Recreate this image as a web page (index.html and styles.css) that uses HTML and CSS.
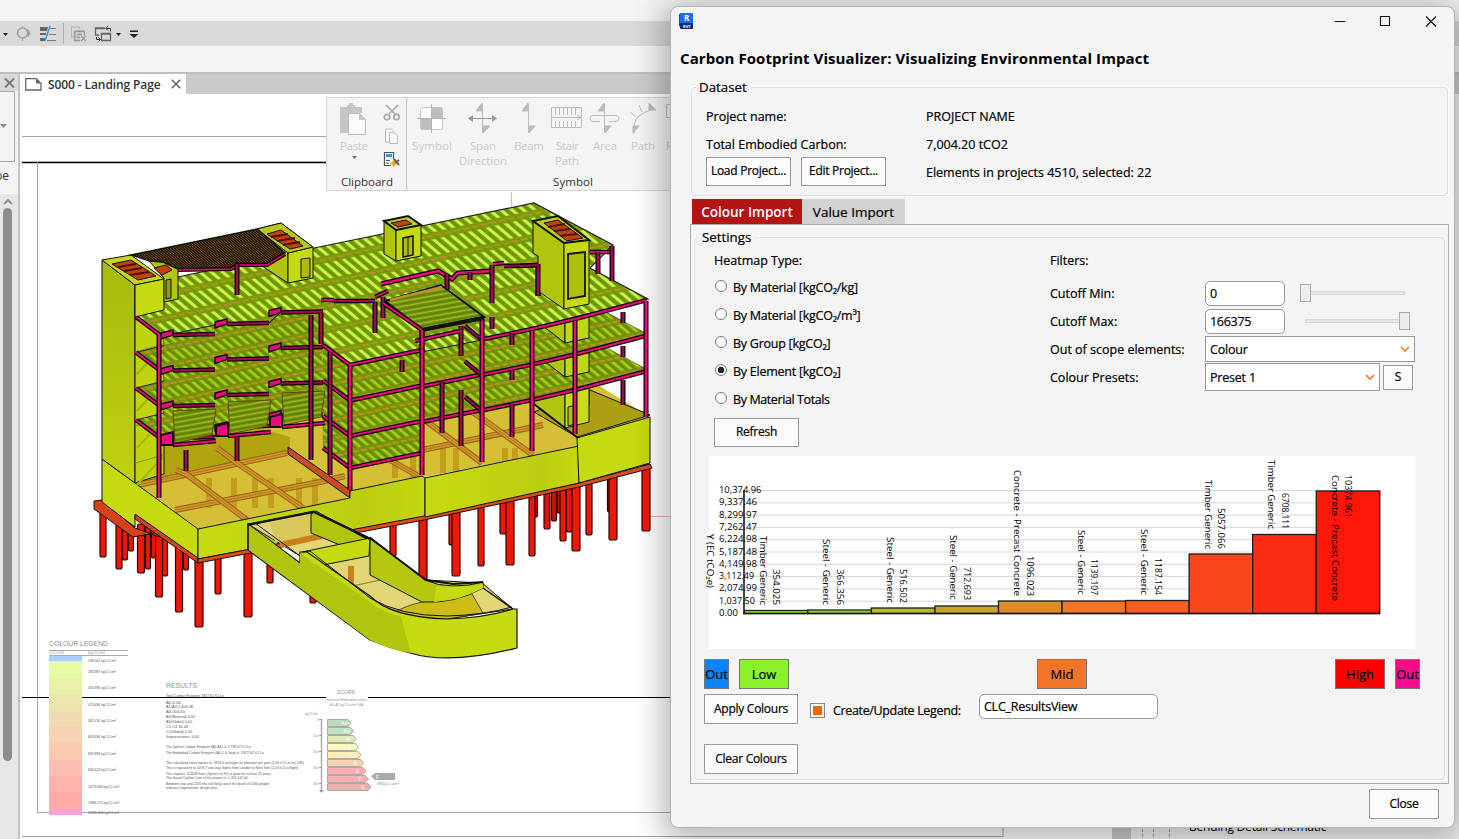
FILE: index.html
```html
<!DOCTYPE html>
<html lang="en">
<head>
<meta charset="utf-8">
<title>Carbon Footprint Visualizer</title>
<link rel="stylesheet" href="styles.css">
</head>
<body>
<div class="app">
  <div class="app-title"></div>
  <div class="quickbar">
    <svg width="150" height="25" viewBox="0 21 150 25">
      <path d="M3 33h5l-2.500 3z" fill="#222"/>
      <path d="M22.500 26v15M28 29.500l2 3.500-2 3.500z" stroke="#a0a0a0" fill="#a0a0a0"/><circle cx="22.500" cy="33" r="5" fill="#d9d9d9" stroke="#a0a0a0" stroke-width="1.500"/>
      <path d="M40 27h8l-1 4h-7zM40 33h6v2h-6zM40 38h5v3h-5z" fill="#666"/><path d="M50 28.500h6M49 34.500h7M47 40.500h9" stroke="#777"/><path d="M50 26l-5 15" stroke="#2a9df0" stroke-width="1.500"/>
      <path d="M63.500 23v21" stroke="#b0b0b0"/>
      <path d="M79 37h-7.500v-10h8v2M75.500 38.500v-8h8" fill="none" stroke="#b5b5b5"/><path d="M80 40.500h-5.500v-9h10v4M77 34.500h5M77 37.500h3M81 36l5 5m0-5l-5 5" fill="none" stroke="#999" stroke-width="1.300"/>
      <path d="M105 28h-9.500v7h4M95 28.500h10M101.500 33.500h9v7h-9zM101 34h10" fill="none" stroke="#666" stroke-width="1.300"/><path d="M106 28.500h4.500v3M108 26l-2 2.500 2 2M96.500 37v2.500h4M98.500 37.500l2 2-2 2" fill="none" stroke="#333"/>
      <path d="M116 33h5l-2.500 3zM129.500 34h9l-4.500 4zM130 30.500h8v1.500h-8z" fill="#222"/>
    </svg>
  </div>
  <div class="options-row"></div>
  <div class="workspace">
    <div class="sidebar">
      <div class="sidebar-head"><svg width="12" height="12" viewBox="0 0 12 12"><path d="M1 1.500l9 9m0-9l-9 9" stroke="#777" stroke-width="1.800"/></svg></div>
      <div class="type-box"><svg width="8" height="5"><path d="M0 0h7L3.500 4z" fill="#888"/></svg></div>
      <div class="type-text">pe</div>
      <div class="scroll-up"><svg width="10" height="6" viewBox="0 0 10 6"><path d="M1 5l4-4 4 4" fill="none" stroke="#888" stroke-width="1.800"/></svg></div>
      <div class="scroll-thumb"></div>
    </div>
    <div class="document">
      <div class="tabbar">
        <div class="doc-tab">
          <svg width="17" height="13" viewBox="0 0 17 13"><path d="M.7.700h10.500L16 5.500v6.500H.7z" fill="none" stroke="#666" stroke-width="1.300"/><path d="M11 .5l5 5h-5z" fill="#666"/></svg>
          <span>S000 - Landing Page</span>
          <svg width="10" height="10" viewBox="0 0 10 10"><path d="M.7.700l8.600 8.600m0-8.600L.7 9.300" stroke="#666" stroke-width="1.600"/></svg>
        </div>
      </div>
      <div class="canvas-row">
        <svg class="sheet" id="sheet" width="1092" height="745" viewBox="20 94 1092 745"></svg>
        <div class="browser-panel">
          <svg class="tree-lines" width="40" height="20"><path d="M2.500 0v20M13.500 0v20M29.500 0v20" stroke="#999" stroke-dasharray="3 2"/></svg>
          <span class="tree-text">Bending Detail Schematic</span>
        </div>
      </div>
    </div>
  </div>
</div>

<svg class="ribbon" width="400" height="95" viewBox="326 97 400 95">
  <rect x="326.500" y="97.500" width="420" height="93" fill="#f4f4f4" stroke="#d4d4d4"/>
  <path d="M406.500 98v92" stroke="#c8c8c8"/>
  <g fill="#c6c6c6" stroke="none">
    <path d="M340 107h7v-2h2v-2h4v2h2v2h7v6h-10v20h-12z"/>
    <path d="M348.500 113.500h11l6 6v15h-17z" fill="#fbfbfb" stroke="#bbb"/><path d="M359 113l7 7h-7z"/>
  </g>
  <path d="M352 156h5l-2.500 3z" fill="#777"/>
  <g fill="none" stroke="#aaa" stroke-width="1.700"><path d="M386 105l9 9M398 105l-9 9"/><circle cx="387" cy="117" r="2.700"/><circle cx="396.500" cy="117" r="2.700"/></g>
  <g fill="#f8f8f8" stroke="#bdbdbd"><path d="M390 142h-4.500v-13h6l3 3"/><path d="M389.500 132.500h5l3 3v8h-8z"/></g>
  <path d="M391 165.500h-6.500v-13h9v7" fill="#fff" stroke="#555" stroke-width="1.200"/><path d="M386 154h6v3h-6z" fill="#3b97d9"/><path d="M386 160.500h4M386 163h3" stroke="#555"/><path d="M390 163l4-3 3 3-3 4z" fill="#ffab19"/><path d="M394 159l5 6M399 160l-4 3" stroke="#666" stroke-width="2"/>
  <rect x="420.500" y="107.500" width="22" height="22" rx="2" fill="#fff" stroke="#c2c2c2"/><path d="M431.500 108h11v10h-11zM421 118.500h10.500v11h-10.500z" fill="#bdbdbd"/><path d="M431.500 104v29M417 118.500h29" stroke="#b5b5b5"/>
  <g stroke="#bbb" fill="#bbb"><path d="M482.500 104v28"/><path d="M482 103v8h-6zM483 126h7l-7 7z"/><path d="M470 118.500h25" stroke="#999"/><path d="M473 115l-5 3.500 5 3.500zM492 115l5 3.500-5 3.500z" fill="#999" stroke="none"/>
  <path d="M528.500 104v29"/><path d="M528 103v8h-6zM529 126h6l-6 7z"/>
  <path d="M551.500 107.500h30v20h-30zM555.500 108v7m4-7v7m4-7v7m4-7v7m4-7v7m4-7v7M555.500 121v6m4-6v6m4-6v6m4-6v6m4-6v6m4-6v6M552 117.500h29M577 115l4 2.500-4 2.500" fill="none"/>
  <path d="M604.500 104v28"/><path d="M604 103v8h-6zM605 126h6l-6 7z"/><path d="M600 121.500h-7a2.500 2.500 0 0 1 0-6h23a2.500 2.500 0 0 1 0 6h-7" fill="none"/>
  <path d="M634 134v-9q2-11 17-15" fill="none"/><path d="M649 103l7 7h-7zM633 126h6l-6 7zM639 105l3 7M630 112l6 5" /></g>
  <path d="M666.500 104.500h12v13h-12z" fill="none" stroke="#bbb"/>
  <g class="ribbon-disabled"><text x="340" y="150" textLength="28">Paste</text><text x="412" y="150" textLength="40">Symbol</text><text x="470" y="150" textLength="26">Span</text><text x="459" y="165" textLength="48">Direction</text><text x="514" y="150" textLength="30">Beam</text><text x="556" y="150" textLength="23">Stair</text><text x="555" y="165" textLength="24">Path</text><text x="593" y="150" textLength="24">Area</text><text x="631" y="150" textLength="24">Path</text><text x="666" y="150">P</text></g>
  <g class="ribbon-label"><text x="341" y="186" textLength="52">Clipboard</text><text x="553" y="186" textLength="40">Symbol</text></g>
</svg>

<div class="dialog">
  <div class="titlebar">
    <svg width="16" height="18" viewBox="0 0 16 18"><path d="M1 2.500L3 1v14l-2-1z" fill="#0c4cc0"/><rect x="2" y="1" width="13" height="11" rx="1" fill="#1a6cff"/><path d="M2 11h13v5q0 1-1 1H3q-1 0-1-1z" fill="#0b2f78"/><text x="6" y="9" font-family="Open Sans" font-size="8" font-weight="700" fill="#fff">R</text><text x="5" y="15.500" font-family="Open Sans" font-size="4" font-weight="700" fill="#fff">RVT</text></svg>
    <svg class="window-buttons" width="110" height="16" viewBox="0 0 110 16"><path d="M5 8.500h10M50.500 3.500h9v9h-9zM96 3.500l10 10m0-10l-10 10" fill="none" stroke="#111" stroke-width="1.100"/></svg>
  </div>
  <h1 class="heading">Carbon Footprint Visualizer: Visualizing Environmental Impact</h1>

  <fieldset class="group dataset">
    <legend>Dataset</legend>
    <div class="dataset-left">
      <span class="line">Project name:</span>
      <span class="line">Total Embodied Carbon:</span>
      <div class="button-row"><button class="btn">Load Project...</button><button class="btn">Edit Project...</button></div>
    </div>
    <div class="dataset-right">
      <span class="line">PROJECT NAME</span>
      <span class="line">7,004.20 tCO2</span>
      <span class="line">Elements in projects 4510, selected: 22</span>
    </div>
  </fieldset>

  <div class="tabs"><div class="tab active">Colour Import</div><div class="tab">Value Import</div></div>
  <div class="tab-panel">
    <fieldset class="group settings">
      <legend>Settings</legend>
      <div class="settings-top">
        <div class="heatmap">
          <span class="line">Heatmap Type:</span>
          <div class="radio"><i></i><span>By Material [kgCO₂/kg]</span></div>
          <div class="radio"><i></i><span>By Material [kgCO₂/m³]</span></div>
          <div class="radio"><i></i><span>By Group [kgCO₂]</span></div>
          <div class="radio checked"><i></i><span>By Element [kgCO₂]</span></div>
          <div class="radio"><i></i><span>By Material Totals</span></div>
          <button class="btn refresh">Refresh</button>
        </div>
        <div class="filters">
          <span class="line">Filters:</span>
          <div class="filter"><label>Cutoff Min:</label><div class="input num">0</div><div class="slider min"><b></b></div></div>
          <div class="filter"><label>Cutoff Max:</label><div class="input num">166375</div><div class="slider max"><b></b></div></div>
          <div class="filter"><label>Out of scope elements:</label><div class="select wide">Colour<svg width="10" height="7"><path d="M1 1l4 4 4-4" fill="none" stroke="#f47a20" stroke-width="1.600"/></svg></div></div>
          <div class="filter"><label>Colour Presets:</label><div class="select">Preset 1<svg width="10" height="7"><path d="M1 1l4 4 4-4" fill="none" stroke="#f47a20" stroke-width="1.600"/></svg></div><button class="btn save">S</button></div>
        </div>
      </div>
      <svg class="chart" id="chart" width="706" height="193" viewBox="709 456 706 193"></svg>
      <div class="swatches">
        <div class="swatch out-low">Out</div><div class="swatch low">Low</div><div class="swatch mid">Mid</div><div class="swatch high">High</div><div class="swatch out-high">Out</div>
      </div>
      <div class="apply-row">
        <button class="btn action">Apply Colours</button>
        <div class="checkbox"><b></b></div>
        <label>Create/Update Legend:</label>
        <div class="input view">CLC_ResultsView</div>
      </div>
      <button class="btn action clear">Clear Colours</button>
    </fieldset>
  </div>
  <div class="footer"><button class="btn close">Close</button></div>
</div>
<script src="script.js"></script>
</body>
</html>
```

FILE: styles.css
```css
* { box-sizing: border-box; }
body { margin: 0; width: 1459px; height: 839px; overflow: hidden; position: relative; background: #f4f4f4; font-family: "Open Sans", "Noto Sans", sans-serif; color: #000; }
svg { display: block; flex: none; }

.app { height: 839px; display: flex; flex-direction: column; }
.app-title { height: 21px; flex: none; background: #f4f4f4; }
.quickbar { height: 25px; flex: none; background: #d9d9d9; }
.options-row { height: 28px; flex: none; background: #f4f4f4; border-bottom: 2px solid #bfbfbf; }
.workspace { flex: 1; display: flex; min-height: 0; }
.sidebar { width: 20px; flex: none; background: #f4f4f4; border-right: 2px solid #c3c3c3; display: flex; flex-direction: column; }
.sidebar-head { height: 17px; background: #d9d9d9; padding: 3px 0 0 4px; }
.type-box { height: 71px; width: 15px; border: 1px solid #aaa; border-left: 0; display: flex; align-items: center; }
.type-text { height: 32px; padding-top: 5px; font-size: 12px; margin-left: -5px; color: #333; }
.scroll-up { height: 14px; background: #e6e6e6; padding: 5px 3px; }
.scroll-thumb { flex: 1; background: #e6e6e6; padding-left: 3px; }
.scroll-thumb::before { content: ""; display: block; width: 9px; height: 553px; border-radius: 5px; background: #8c8c8c; }
.document { flex: 1; min-width: 0; display: flex; flex-direction: column; }
.tabbar { height: 20px; background: #cbcbcb; }
.doc-tab { width: 166px; height: 20px; background: #fff; padding: 0 0 0 5px; display: flex; align-items: center; gap: 6px; font-size: 12px; font-weight: 600; color: #333; letter-spacing: -.1px; white-space: nowrap; }
.doc-tab span { width: 117px; }
.canvas-row { display: flex; height: 745px; }
.sheet { background: #fff; }
.browser-panel { flex: 1; border-left: 19px solid #ccc; background: #f4f4f4; display: flex; align-items: flex-end; overflow: hidden; white-space: nowrap; }
.tree-lines { margin-left: 9px; }
.tree-text { font-size: 12px; line-height: 16px; padding: 0 0 4px 9px; letter-spacing: -.2px; }

.ribbon { position: absolute; left: 326px; top: 97px; font-size: 11.500px; }
.ribbon-disabled { fill: #c9c9c9; }
.ribbon-label { fill: #333; }

.dialog { position: absolute; left: 670px; top: 6px; width: 785px; height: 822px; background: #f4f4f4; border: 1px solid #b4b4b4; border-radius: 8px; box-shadow: 0 6px 30px 8px rgba(0,0,0,.28); font-size: 12.500px; -webkit-text-stroke: .2px currentColor; }
.titlebar { height: 28px; display: flex; align-items: center; justify-content: space-between; padding: 0 13px 0 7px; -webkit-text-stroke: 0; }
.window-buttons { margin-right: 1px; }
.heading { margin: 11px 0 0 9px; font-size: 15px; line-height: 24px; font-weight: 700; letter-spacing: .07px; white-space: nowrap; -webkit-text-stroke: 0; }
.group { margin: 0; padding: 0; border: 1px solid #d5dfe5; border-radius: 4px; min-width: 0; box-shadow: 0 0 0 1px #fff; }
.group legend { padding: 0 4px 0 3px; margin-left: 4px; font-size: 13.300px; line-height: 18px; }
.dataset { margin: 8px 6px 0 20px; height: 118px; display: flex; padding-left: 14px; }
.dataset legend { margin-left: -10px; }
.dataset-left { width: 220px; padding-top: 7px; }
.dataset-right { padding-top: 7px; }
.line { display: block; height: 28px; line-height: 28px; white-space: nowrap; }
.button-row { display: flex; gap: 10px; margin-top: -2px; }
.btn { font: inherit; font-size: 12px; letter-spacing: -.27px; color: #000; background: #fbfbfb; border: 1px solid #999; height: 29px; width: 85px; padding: 0 0 2px; white-space: nowrap; flex: none; -webkit-text-stroke: .2px #000; }
.tabs { display: flex; margin: 3px 0 0 21px; height: 25px; }
.tab { width: 103px; background: #d2d2d2; line-height: 26px; text-align: center; font-size: 13.500px; }
.tab.active { width: 110px; background: #b31414; color: #fff; font-weight: 600; -webkit-text-stroke: 0; }
.tab-panel { margin: 0 5px 0 19px; height: 560px; border: 1px solid #acacac; padding: 3px 3px 3px; }
.settings { height: 552px; }
.settings-top { display: flex; height: 210px; padding: 1px 0 0 19px; }
.heatmap { width: 336px; }
.heatmap .line { height: 26px; }
.radio { display: flex; align-items: center; height: 28px; white-space: nowrap; letter-spacing: -.25px; }
.radio:last-of-type { letter-spacing: -.4px; }
.radio i { width: 12px; height: 12px; border: 1px solid #777; border-radius: 50%; background: #fff; margin-right: 6px; margin-left: 1px; margin-top: -2px; }
.radio.checked i { background: radial-gradient(circle, #222 3px, #fff 3.600px); }
.refresh { margin-top: 5px; }
.filters .line { height: 32px; line-height: 28px; }
.filter { display: flex; align-items: center; height: 28px; white-space: nowrap; }
.filter label { width: 155px; }
.input { border: 1px solid #999; border-radius: 5px; background: #fff; height: 25px; line-height: 24px; padding-left: 4px; }
.num { width: 80px; letter-spacing: -.3px; }
.slider { position: relative; width: 100px; height: 4px; background: #e6e8e7; border: 1px solid #d4d6d5; margin-left: 20px; }
.slider b { position: absolute; top: -8px; width: 11px; height: 18px; background: #ececec; border: 1px solid #aaa; }
.slider.min b { left: -6px; }
.slider.max b { right: -6px; }
.select { display: flex; align-items: center; justify-content: space-between; width: 175px; height: 28px; border: 1px solid #999; background: #fff; padding: 0 4px; letter-spacing: -.2px; }
.select.wide { width: 210px; height: 26px; }
.save { width: 30px; height: 25px; margin-left: 3px; }
.chart { background: #fff; margin-left: 14px; overflow: visible; }
.chart text { font-size: 9.800px; }
.swatches { display: flex; margin: 10px 24px 0 9px; }
.swatch { width: 50px; height: 30px; border: 1px solid #777; line-height: 29px; text-align: center; font-size: 13px; overflow: hidden; }
.out-low { background: #0a84ff; width: 25px; display: flex; justify-content: center; }
.low { background: #8af22a; margin-left: 10px; }
.mid { background: #f27427; margin: 0 auto; }
.high { background: #f00; }
.out-high { background: #ff0a8c; width: 25px; margin-left: 10px; display: flex; justify-content: center; }
.apply-row { display: flex; margin: 5px 0 0 9px; align-items: flex-start; }
.action { width: 94px; height: 30px; }
.checkbox { width: 15px; height: 15px; border: 1px solid #888; background: #fff; padding: 2px; margin: 9px 8px 0 12px; }
.checkbox b { display: block; width: 9px; height: 9px; background: #f2650a; }
.apply-row label { width: 146px; line-height: 33px; letter-spacing: -.35px; }
.view { width: 179px; letter-spacing: -.25px; }
.clear { display: block; margin: 17px 0 0 9px; }
.footer { display: flex; justify-content: flex-end; padding: 5px 15px 0 0; }
.close { width: 70px; height: 30px; }
```

FILE: script.js
```js
const poly = (pts, fill, extra = 'stroke="#111" stroke-width="1"') => `<polygon points="${pts}" fill="${fill}" ${extra}/>`;
const line = (pts, color, w) => `<polyline points="${pts}" fill="none" stroke="${color}" stroke-width="${w}"/>`;
const label = (x, y, s, size, w, fill = '#8f8f8f') => `<text x="${x}" y="${y}" font-size="${size}" fill="${fill}"${w ? ` textLength="${w}" lengthAdjust="spacingAndGlyphs"` : ''}>${s}</text>`;
const LIME = '#c5da0f', OLIVE = '#b1c40e', PINK = '#f0087e', MAROON = '#a0085a';
// Steel members are drawn as a dark casing with a coloured core.
const beam = (pts, c = PINK, w = 4.5) => line(pts, '#120208', w) + line(pts, c, w - 2.6);
const column = (x, y1, y2, c = PINK) => beam(`${x},${y1} ${x},${y2}`, c, 5);

function pile([x, y1, y2, w = 7, c = '#ee1808']) {
  return `<rect x="${x - w / 2}" y="${y1}" width="${w}" height="${y2 - y1}" rx="2" fill="${c}" stroke="#300" stroke-width="1.200"/>`;
}

function drawBuilding() {
  let o = '';
  const rearPiles = [[119,524,569,6],[125,524,560,5],[131,524,551,5],[141,524,573],[148,524,569,5],[154,524,558,5],[165,530,576,5],[103,510,557,6],[218,555,594,6],[186,545,570,5],[270,555,583,6],[313,580,603,6],
    [393,520,556,6],[451,510,545,4],[503,495,534,6],[535,487,517,5,'#c9150a'],[547,487,529,6,'#d9150a'],[554,485,521,5,'#c9150a'],[559,480,513,4,'#b9150a'],[563,483,541,6],[569,480,532,5],[609,470,512,3,'#a01008'],[589,478,535,6],[481,500,566,6],[532,490,556,6]];
  o += rearPiles.map(pile).join('');
  o += [[159,532,597],[179,542,612,7],[199,558,627,8],[248,548,617,8],[423,512,580,8],[456,510,576,8],[510,498,565,8],[576,484,551,8],[613,474,540,8],[646,464,531,8]].map(pile).join('');

  // Basement deck and its timber grid.
  o += poly('102,459 164,310 590,380 650,417 579,446 425,477 350,498 198,529', '#d5bf35', '');
  o += poly('164,440 250,425 290,437 290,450 138,484 164,470', '#aaa008', 'opacity=".85"');
  for (const x of [206, 231, 252, 268, 296, 312, 392, 410, 440, 453, 502, 512]) o += `<rect x="${x}" y="${x > 380 ? 448 : 478}" width="6" height="${x > 430 ? 25 : 30}" fill="#bd8a12" opacity=".65"/>`;
  for (const g of ['138,485 287,453', '175,510 320,482 345,476', '176,470 186,474 247,520', '217,448 237,463 303,508', '350,465 422,450 543,425', '390,460 420,477', '425,420 482,463', '470,410 533,455'])
    o += line(g, '#94600e', 6) + line(g, '#d1962b', 4) + line(g, '#a8721a', .8);
  o += poly('288,447 350,490 350,498 288,454', '#c74e18');

  // Perimeter walls.
  o += poly('94,501 102,500 135,528 198,551 198,561 155,533 133,537 94,509', '#d8421a');
  o += poly('102,459 135,483 198,529 198,559 135,516 135,527 102,502', LIME);
  o += poly('135,514 198,558 198,563 135,519', '#d8421a');
  o += poly('198,529 350,498 350,491 422,476 425,478 425,517 198,559', 'url(#wallFront)');
  o += poly('198,559 424,516 579,483 650,464 652,468 579,487 424,520 198,563', '#e04a1c');
  o += poly('425,478 579,446 579,483 425,517', 'url(#wallFront)');
  o += poly('577,438 650,417 650,463 579,483', LIME);
  o += poly('590,390 650,415 577,437 534,412', '#aaa012');

  // West stair tower.
  o += poly('102,260 135,285 135,483 102,459', 'url(#towerSide)');
  o += poly('135,285 164,279 164,474 135,483', '#c0d30e');
  for (let y = 352; y < 470; y += 37) o += line(`135,${y} 164,${y - 8}`, '#808c08', 1) + line(`137,${y + 22} 163,${y - 6}`, '#a2b50b', 2);

  // Storeys from the lowest upwards; each slab covers the one below.
  for (let i = 3; i >= 0; i--) {
    const y = i * 35.500, s = i === 3 ? 103 : y;
    const w = p => p.map(([a, b]) => `${a},${b + s}`).join(' ');
    if (i === 0) o += poly('136,317 178,277 314,248 534,203 613,245 590,268 648,299 482,340 422,352 350,365 322,344 322,312 281,312 268,324 215,325 172,334 159,335', 'url(#roof)', 'stroke="#222" stroke-width="1.200"');
    else {
      o += poly(w([[136,317],[164,310],[164,292],[322,272],[322,312],[281,315],[227,324],[172,334],[159,335]]), 'url(#deck)', '');
      o += line(w([[136,317],[164,310]]), '#222', 1);
      if (i < 3) o += poly(w([[422,290],[590,268],[648,299],[482,340],[422,351]]), 'url(#deck)', 'stroke="#333" stroke-width=".6"');
      o += poly(w([[322,290],[375,290],[422,290],[422,350],[350,365],[323,345]]), 'url(#deck)', '');
    }
    // East core passing through the storey.
    if (i > 0) {
      const b = i * 34;
      o += poly(`534,${251 + b} 565,${275 + b} 565,${309 + b} 534,${285 + b}`, OLIVE) + poly(`565,${275 + b} 589,${270 + b} 589,${304 + b} 565,${309 + b}`, '#c2d713');
    }
    if (i === 3) o += poly('534,370 565,390 565,428 534,404', OLIVE) + poly('565,390 589,385 589,422 565,428', '#c8dc18') + poly('568,407 576,405 576,424 568,426', '#b2c010') + line('534,404 578,438', '#111', 2);
    o += beam(w([[136,317],[160,335]]));
    for (const [x, yy] of [[173,335],[227,324],[281,312.500]]) {
      o += beam(w([[x, yy],[x + 42, yy - 1]]), MAROON);
      o += poly(w([[x - 12, yy - 2],[x, yy - 5],[x, yy],[x - 12, yy + 4]]), PINK, 'stroke="#111" stroke-width="1.500"');
    }
    if (i < 3) o += beam(w([[482,339.500],[532,329],[575,319],[647,300]]));
    o += beam(w([[323,345],[350,365],[422,350]]));
    if (i > 0 && i < 3) o += beam(w([[422,351],[482,339]]));
    if (i < 3) o += beam(w([[465,326],[482,340]]), MAROON);
  }
  // Pitched ceiling panels of the lowest storey.
  for (const [x, y] of [[173, 411], [228, 402], [282, 393]]) o += poly(`${x},${y} ${x + 43},${y - 2} ${x + 39},${y + 24} ${x + 2},${y + 32}`, 'url(#ribs)', 'stroke="#68400a" stroke-width="1"') + beam(`${x},${y + 34} ${x + 43},${y + 30}`) + poly(`${x - 12},${y + 24} ${x},${y + 21} ${x},${y + 34} ${x - 12},${y + 34}`, PINK, 'stroke="#111" stroke-width="2"');

  for (const [x, a, b, c] of [[159,335,498],[186,450,471,MAROON],[237,437,461,MAROON],[311,315,460,MAROON],[321,313,344,MAROON],[330,352,475,MAROON],[350,366,490],[422,329,475],[375,302,333,MAROON],[402,360,372,MAROON],[442,382,433,MAROON],[461,326,356,MAROON],[461,390,446,MAROON],[482,318,462],[492,317,329,MAROON],[512,333,345,MAROON],[512,370,380,MAROON],[512,404,437,MAROON],[532,331,451],[575,321,434],[623,312,323,MAROON],[623,346,357,MAROON],[623,380,405,MAROON],[646,301,417]]) o += column(x, a, b, c);
  o += beam('590,252 613,252') + column(598,252,274,MAROON) + column(612,246,281,MAROON);

  // Stepped beams and raised platform in the centre.
  o += beam('321,300 334,300') + beam('334,301 375,301', MAROON) + beam('375,297 388,291') + beam('381,284 438,271 452,279 458,273 493,271', PINK, 5) + beam('493,264 504,263') + beam('504,266 540,265', MAROON);
  o += column(447,274,290,MAROON) + column(470,272,280,MAROON) + column(492,265,303,MAROON) + column(538,264,296,MAROON) + column(383,297,318,MAROON);
  o += beam('415,341 460,331');
  o += poly('385,301 441,285 484,317 422,329', 'url(#ribs)', 'stroke="#111" stroke-width="2"') + line('390,300 442,287', '#c48c32', 2.500) + beam('383,303 422,330') + line('422,330 484,318', '#111', 4) + column(422,330,352);

  // Roof-level cores.
  const slats = (pts, d) => poly(pts, '#c5400b', 'stroke="#111"') + d.map(p => line(p, '#43140a', 2)).join('');
  o += poly('102,260 131,255 164,279 135,285', '#c8d816') + slats('112,264 131,260 156,276 138,280', ['118,267 136,264','124,271 142,268','130,275 149,272']);
  o += poly('135,285 164,279 164,310 135,317', LIME) + poly('149,261 167,262 178,269 178,299 164,302 164,278', OLIVE) + poly('166,280 171,279 171,298 166,299', '#8e9c0a');
  o += slats('154,268 166,265 172,270 162,275', []);
  o += poly('257,229 281,223 313,247 288,253 288,283 262,266', OLIVE) + poly('288,253 313,247 313,278 288,283', LIME) + poly('301,259 310,258 310,277 301,278', '#aabd0e') + poly('257,229 281,223 313,247 288,253', '#b9ca16') + slats('267,234 281,230 303,246 290,249', ['271,237 288,234','277,241 295,238','283,245 300,242']);
  o += poly('131,255 257,229 285,253 267,264 237,263 229,269 178,269 163,262 150,261', 'url(#grille)', 'stroke="#111" stroke-width="1.500"') + beam('178,270 231,269 237,265 267,265 285,254', PINK, 4) + column(237,264,295,MAROON);
  o += poly('384,221 396,230 396,261 384,254', OLIVE) + poly('396,230 421,225 421,256 396,261', LIME) + poly('384,221 408,216 421,225 396,230', '#c0d012', 'stroke="#111" stroke-width="2"') + slats('391,223 406,220 412,224 398,227', []) + poly('403,238 413,236 413,255 403,257', '#afc00c', 'stroke="#111" stroke-width="1.500"') + line('408,237 408,256', '#111', 1);
  o += poly('533,221 564,243 564,309 538,291 538,256 533,253', OLIVE) + poly('564,243 589,240 589,304 564,309', LIME) + poly('533,221 558,216 589,240 564,243', '#bfd014', 'stroke="#111" stroke-width="2"') + slats('544,223 558,220 583,238 567,241', ['548,227 565,224','554,231 571,229','560,236 577,234']) + poly('568,254 585,252 585,296 568,299', '#aebf0d', 'stroke="#111" stroke-width="1.800"') + column(538,264,296,MAROON) + beam('520,266 538,265', MAROON);

  // Access ramp.
  o += poly('248,524 314,511 370,538 425,580 482,583 513,609 447,619 395,612 370,602 300,556', '#e3d676');
  o += poly('270,523 310,514 313,540 275,542', '#d9c85c', '') + line('280,545 322,536', '#c68119', 6) + line('351,566 351,590', '#c98218', 6) + line('353,586 380,580', '#8d7a13', 1);
  o += '<path d="M370 602Q405 620 447 619L483 613 472 594 422 602Q405 606 395 612z" fill="#cdbd17" stroke="#333" stroke-width=".8"/>';
  o += poly('311,514 316,511 370,541 340,545 311,533', OLIVE);
  o += '<path d="M370 537L425 580Q438 586 453 586 470 586 483 582L483 588Q455 604 422 602L370 575z" fill="#b5c70e" stroke="#111"/><path d="M436 586Q465 588 483 584V588Q462 600 434 602z" fill="#c5da0f"/>';
  o += poly('302,552 370,538 369,556 323,565', LIME);
  o += '<path d="M248 524L300 563 300 552 307 552 370 596Q390 617 447 619 485 618 513 609L517 609V648Q450 665 410 653 390 648 370 640L248 550z" fill="#c5da0f" stroke="#111" stroke-width="1.200"/>';
  o += '<path d="M249 525L300 564V553L370 602Q382 612 401 617L411 653Q390 650 370 640L249 550z" fill="#b1c40e"/>';
  o += '<path d="M248 524L255 523 300 556M302 552L310 551 370 598Q400 616 447 616 485 615 512 607" fill="none" stroke="#111" stroke-width="1"/>' + line('370,538 426,580 453,584 483,582', '#111', 2) + line('248,525 314,512 370,539', '#111', 2) + line('483,588 513,609', '#111', 1.500) + line('248,524 248,550', '#111', 1.200);
  return o;
}

function drawLegend() {
  let o = label(49, 646, 'COLOUR LEGEND', 8, 59) + label(49, 654, 'COLOUR', 4, 15) + label(88, 654, '(kgCO₂/m²)', 4, 17);
  o += line('49,650.500 128,650.500', '#aaa', 1) + line('49,655.500 128,655.500', '#aaa', 1);
  const bands = [['#a9cffb',656,661],['#e6fba4',661,678],['#e8f0aa',678,694],['#ece5ac',694,710],['#f0dcb0',710,727],['#f7d2b0',727,743],['#f9c9b0',743,760],['#fbbfaf',760,776],['#fcb4ac',776,792],['#fdaaa8',792,809],['#faa4d6',809,815]];
  o += bands.map(([c, a, b]) => `<rect x="49" y="${a}" width="33" height="${b - a}" fill="${c}"/>`).join('');
  const values = ['189.002','283.987','416.990','470.694','482.430','803.694','832.894','845.424','1073.694','7908.270','10655.000'];
  [661.500,672.500,688.500,705.500,721.500,737.500,754.500,770.500,787.500,803.500,814].forEach((y, i) => o += label(88, y, values[i] + ' kgCO₂/m²', 4.200, i > 7 ? 31 : 28, '#555'));
  o += label(166, 688, 'RESULTS', 8, 31);
  const lines = [[697,'Total Carbon Footprint: 3827.82 tCO₂e',58],[703.500,'A0    0.00',15],[707.500,'A1-A3    2,404.48',27],[712.500,'A4    204.60',19],[717.500,'A5(Material)    0.00',29],[722.500,'A5(Global)    0.00',26],[727.500,'C1-C4    30.48',22],[732.500,'C1(Global)    0.00',26],[737.500,'Sequestration    -0.00',33],[747.500,'The Upfront Carbon Footprint (A0-A5) is: 2,738.07 tCO₂e',85],[753.500,'The Embodied Carbon Footprint (A0-C &amp; Seq) is: 3,827.82 tCO₂e',98],[763.500,'The calculated value equals to: 1870.0 average car emission per year (1.60 tCO₂e/car) (UK)',138],[769,'This is equivalent to 1073.7 one-way flights from London to New York (2.23 tCO₂e/flight)',132],[774.500,'This requires 112428 trees (Spruce or Fir) to grow for at least 20 years',105],[779,'The Social Carbon Cost of this project is: £ 424,142.00',82],[784.500,'Between now and 2100 this will likely cause the death of 1000 people',103],[788.500,'without a regenerative design plan.',52]];
  o += lines.map(([y, s, w]) => label(166, y, s, 4.200, w, '#555')).join('');
  o += '<rect x="326" y="688" width="42" height="20" fill="#fff"/>' + label(337, 694, 'SCORS', 6, 18) + label(326, 701, 'Structural Embodied carbon', 4, 41) + label(330, 706, 'A1-A5 kgCO₂e/m² GIA', 4, 33) + label(305, 715, 'kgCO₂/m²', 4, 13);
  o += line('321.500,719 321.500,791', '#aaa', 1.500) + '<path d="M319 790h5l-2.500 3z" fill="#999"/>';
  ['0','100','200','300','400'].forEach((s, i) => o += line(`319,${719.500 + i * 16} 322,${719.500 + i * 16}`, '#aaa', 1) + label(i ? 313 : 317, 721 + i * 16, s, 3.600, i ? 5.500 : 0));
  ['#bcd8bd','#bfe3bd','#dfebbd','#fff8bd','#ffebb8','#fcd2ae','#fab0b0','#fab0b0','#e9b0b0'].forEach((c, i) => { const y = 719.500 + i * 8, x = 348 + i * 2.500; o += `<path d="M327.500 ${y}H${x}l3 3.500-3 3.500H327.500z" fill="${c}" stroke="#aaa"/>` + label(x - 7, y + 5.500, ['A++','A+','A','B','C','D','E','F','G'][i], 5, 0, '#fff'); });
  o += '<path d="M371 776l4-3h20v7h-20z" fill="#aaa"/>' + label(376, 778.500, 'F', 5, 0, '#fff') + label(377, 784.500, '386kgCO₂e/m²', 4, 22);
  return o;
}

const defs = `<defs>
<pattern id="roof" width="9" height="26" patternUnits="userSpaceOnUse" patternTransform="matrix(1 -.22 .85 .72 0 0)"><rect width="9" height="26" fill="#7a9c09"/><rect x="1" y="5" width="3.600" height="18" fill="#c6f84a"/><rect x="6.500" y="2" width="1" height="22" fill="#65850a"/><rect y="0" width="6" height="2" fill="#bd8f2c"/></pattern>
<pattern id="deck" width="8" height="20" patternUnits="userSpaceOnUse" patternTransform="matrix(1 -.22 .85 .72 3 2)"><rect width="8" height="20" fill="#769608"/><rect x="1" y="5" width="3" height="12" fill="#a6d210"/><rect x="5.500" y="3" width="1" height="15" fill="#587608"/><rect width="5.500" height="2.500" fill="#c08c2c"/></pattern>
<pattern id="ribs" width="20" height="5" patternUnits="userSpaceOnUse" patternTransform="rotate(-10)"><rect width="20" height="5" fill="#789c0a"/><rect y="1" width="20" height="1" fill="#a6b827"/><rect y="3.500" width="20" height="1" fill="#4f6507"/></pattern>
<pattern id="grille" width="4" height="3" patternUnits="userSpaceOnUse" patternTransform="matrix(1 .8 -.7 .25 0 0)"><rect width="4" height="3" fill="#120d03"/><rect width="4" height="1.200" fill="#7d541b"/></pattern>
<linearGradient id="wallFront"><stop stop-color="#c6db10"/><stop offset=".75" stop-color="#bccd11"/><stop offset="1" stop-color="#c3d80f"/></linearGradient>
<linearGradient id="towerSide" x2="0" y2="1"><stop stop-color="#a7ba0d"/><stop offset="1" stop-color="#bfd20f"/></linearGradient></defs>`;

document.getElementById('sheet').innerHTML = defs + '<g font-family="Liberation Sans">' +
  line('22,136.500 670,136.500', '#a6a6a6', 1) + line('22,162.500 670,162.500', '#000', 1.300) + line('37.500,812.500 37.500,161.500 670,161.500', '#a6a6a6', 1) + line('511.500,192 511.500,207', '#edb4aa', 1) + line('650,516.500 670,516.500', '#edb4aa', 1) +
  line('22,697.500 670,697.500', '#000', 1) + line('37,812.500 670,812.500', '#a6a6a6', 1) + line('22,836.500 1003,836.500 1003,820', '#a6a6a6', 1) + drawLegend() + drawBuilding() + '</g>';

const bars = [
  ['Timber Generic','354.025',610.500,'#8df22a',536,605,569,605],['Steel - Generic','366.356',610,'#98d82b',539,605,569,605],['Steel - Generic','516.502',608,'#b3be29',537,603,569,603],['Steel - Generic','712.693',606,'#c8a428',535,600,567,600],['Concrete - Precast Concrete','1096.023',601,'#dd8c28',470,596,556,596],['Steel - Generic','1139.107',601,'#f27427',530,595,559,595],['Steel - Generic','1187.154',600.500,'#f55e20',529,595,558,595],['Timber Generic','5057.066',554,'#f8471a',480,549,508,549],['Timber Generic','6708.111',534.500,'#fb2e13',460,529,493,529],['Concrete - Precast Concrete','10374.961',491,'#ff170a',475,601,475,518]];
const ticks = ['10,374.96','9,337.46','8,299.97','7,262.47','6,224.98','5,187.48','4,149.98','3,112.49','2,074.99','1,037.50','0.00'];
const down = (x, a, b, s) => `<text transform="translate(${x} ${a}) rotate(90)" textLength="${b - a}" lengthAdjust="spacingAndGlyphs">${s}</text>`;
document.getElementById('chart').innerHTML =
  ticks.slice(0, 10).map((_, i) => line(`744,${490.500 + i * 12.300} 1380,${490.500 + i * 12.300}`, '#d8d8d8', 1)).join('') +
  line('744,490 744,614', '#333', 1.800) +
  bars.map((b, i) => `<rect x="${744.300 + i * 63.550}" y="${b[2]}" width="63.550" height="${613.500 - b[2]}" fill="${b[3]}" stroke="#1c1c1c" stroke-width="1.300"/>`).join('') + line('743,613.500 1380,613.500', '#111', 1.500) +
  ticks.map((s, i) => `<text x="719" y="${493 + i * 12.300}" textLength="${[42.500,38,38,38,38,38,38,35,38,36,19][i]}" lengthAdjust="spacingAndGlyphs">${s}</text>`).join('') +
  down(706.500, 534, 588, 'Y (EC tCO₂e)') +
  bars.map((b, i) => down(759.500 + i * 63.600, b[4], b[5], b[0]) + down(773 + i * 63.600, b[6], b[7], b[1])).join('');
```
